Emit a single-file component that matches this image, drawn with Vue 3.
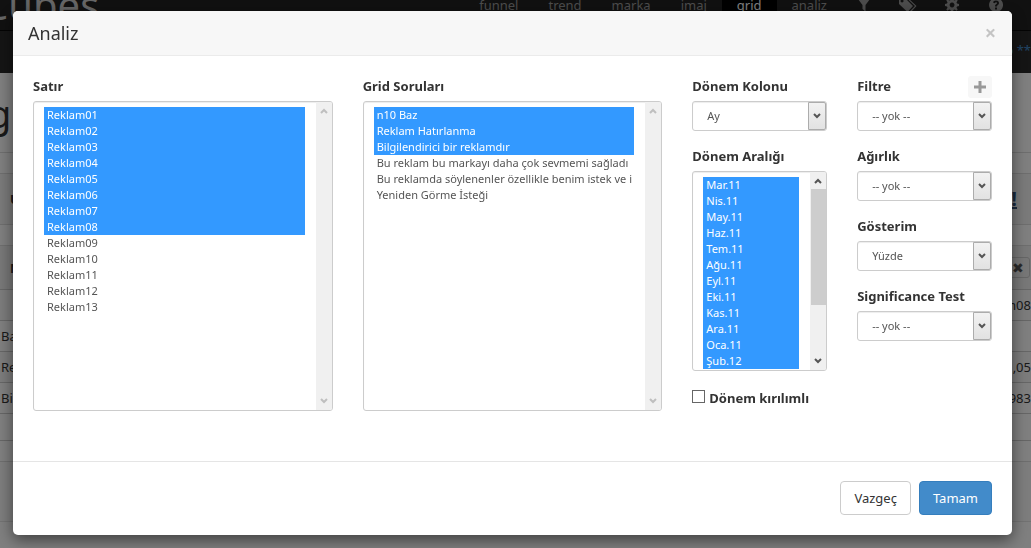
<script setup>
import { ref } from 'vue'

const navLinks = ['funnel', 'trend', 'marka', 'imaj', 'grid', 'analiz']

const rows = Array.from({ length: 13 }, (_, i) => 'Reklam' + String(i + 1).padStart(2, '0'))
const selectedRows = ref(rows.slice(0, 8))

const questions = [
  'n10 Baz',
  'Reklam Hatırlanma',
  'Bilgilendirici bir reklamdır',
  'Bu reklam bu markayı daha çok sevmemi sağladı',
  'Bu reklamda söylenenler özellikle benim istek ve i',
  'Yeniden Görme İsteği',
]
const selectedQuestions = ref(questions.slice(0, 3))

const periods = [
  'Mar.11', 'Nis.11', 'May.11', 'Haz.11', 'Tem.11', 'Ağu.11',
  'Eyl.11', 'Eki.11', 'Kas.11', 'Ara.11', 'Oca.11', 'Şub.12',
]
const selectedPeriods = ref([...periods])

const options = [
  { id: 'filter', label: 'Filtre', value: '-- yok --', add: true },
  { id: 'weight', label: 'Ağırlık', value: '-- yok --' },
  { id: 'display', label: 'Gösterim', value: 'Yüzde' },
  { id: 'significance', label: 'Significance Test', value: '-- yok --' },
]
const splitByPeriod = ref(false)
</script>

<template>
  <div class="page">
    <header class="topbar">
      <span class="brand">Cubes</span>
      <nav class="nav">
        <a v-for="link in navLinks" :key="link" href="#" :class="{ active: link === 'grid' }">{{ link }}</a>
        <a href="#" aria-label="Filtre">
          <svg viewBox="0 0 14 14"><path d="M1 1h12L8.500 7v6.500L5.500 11V7z" /></svg>
        </a>
        <a href="#" aria-label="Etiketler">
          <svg class="wide" viewBox="0 0 18 14"><path fill-rule="evenodd" d="M0 0h6l8 8-5.500 6L0 6zM3 1.500a1.500 1.500 0 1 0 .1 0zM7.500 0H9l8.500 8L12 14l-1-1 5-5z" /></svg>
        </a>
        <a href="#" aria-label="Ayarlar">
          <svg viewBox="0 0 14 14"><path fill-rule="evenodd" d="M6 0h2l.4 2 1.400.6L11.500 1.400 12.700 2.600 11.500 4.200l.5 1.400 2 .4v2l-2 .4-.5 1.400 1.200 1.700-1.200 1.200-1.700-1.200-1.400.5L8 14H6l-.4-2-1.400-.5-1.700 1.200-1.200-1.200 1.200-1.700L2 8.400 0 8V6l2-.4.5-1.400L1.300 2.600l1.200-1.200 1.700 1.200L5.600 2zM7 4.600a2.400 2.400 0 1 0 .1 0z" /></svg>
        </a>
        <a href="#" aria-label="Yardım">
          <svg viewBox="0 0 14 14"><path fill-rule="evenodd" d="M7 0a7 7 0 1 0 .1 0zM4 4.500C4.300 1.800 10 1.700 10 5c0 2-2 1.800-2 3.500H6C6 6 8 6.300 8 5c0-1-1.800-1-2 .300zM6 9.500h2v2H6z" /></svg>
        </a>
      </nav>
    </header>
    <div class="userbar"><a href="#">o **</a></div>
    <main class="content">
      <h1>grid</h1>
      <div class="band short"></div>
      <div class="band tools"><b>U</b><a href="#" class="mark">!</a></div>
      <div class="band short"></div>
      <div class="band head"><b>N</b><button type="button" class="remove" aria-label="Kaldır">✖</button></div>
      <table class="results">
        <tbody>
          <tr><td></td><td>m08</td></tr>
          <tr><td>Baz</td><td></td></tr>
          <tr><td>Reklam</td><td>,05</td></tr>
          <tr><td>Bilgi</td><td>,983</td></tr>
        </tbody>
      </table>
      <div class="band total"></div>
      <div class="band blank"></div>
      <div class="band last"></div>
    </main>
  </div>

  <div class="backdrop">
    <section class="modal" role="dialog" aria-labelledby="title">
      <header class="modal-head">
        <h2 id="title">Analiz</h2>
        <button type="button" class="close" aria-label="Kapat">×</button>
      </header>

      <div class="modal-body">
        <div class="field">
          <label for="rows">Satır</label>
          <div class="listbox tall">
            <select id="rows" v-model="selectedRows" multiple>
              <option v-for="r in rows" :key="r">{{ r }}</option>
            </select>
            <div class="scroll off">
              <svg viewBox="0 0 8 6"><path d="M1 5l3-3 3 3" /></svg>
              <svg viewBox="0 0 8 6"><path d="M1 1l3 3 3-3" /></svg>
            </div>
          </div>
        </div>

        <div class="field">
          <label for="questions">Grid Soruları</label>
          <div class="listbox tall">
            <select id="questions" v-model="selectedQuestions" multiple>
              <option v-for="q in questions" :key="q">{{ q }}</option>
            </select>
            <div class="scroll off">
              <svg viewBox="0 0 8 6"><path d="M1 5l3-3 3 3" /></svg>
              <svg viewBox="0 0 8 6"><path d="M1 1l3 3 3-3" /></svg>
            </div>
          </div>
        </div>

        <div class="stack">
          <div class="field">
            <label for="column">Dönem Kolonu</label>
            <div class="dropdown">
              <select id="column"><option>Ay</option></select>
              <span class="arrow"><svg viewBox="0 0 8 6"><path d="M1 1l3 3 3-3" /></svg></span>
            </div>
          </div>
          <div class="field">
            <label for="periods">Dönem Aralığı</label>
            <div class="listbox low">
              <select id="periods" v-model="selectedPeriods" multiple>
                <option v-for="p in periods" :key="p">{{ p }}</option>
              </select>
              <div class="scroll">
                <svg viewBox="0 0 8 6"><path d="M1 5l3-3 3 3" /></svg>
                <span class="track"><span class="thumb"></span></span>
                <svg viewBox="0 0 8 6"><path d="M1 1l3 3 3-3" /></svg>
              </div>
            </div>
          </div>
          <label class="check"><input v-model="splitByPeriod" type="checkbox" />Dönem kırılımlı</label>
        </div>

        <div class="stack">
          <div v-for="o in options" :key="o.id" class="field">
            <div class="label-row">
              <label :for="o.id">{{ o.label }}</label>
              <button v-if="o.add" type="button" class="add" aria-label="Filtre ekle">
                <svg viewBox="0 0 12 12"><path d="M6 0v12M0 6h12" /></svg>
              </button>
            </div>
            <div class="dropdown">
              <select :id="o.id"><option>{{ o.value }}</option></select>
              <span class="arrow"><svg viewBox="0 0 8 6"><path d="M1 1l3 3 3-3" /></svg></span>
            </div>
          </div>
        </div>
      </div>

      <footer class="modal-foot">
        <button type="button" class="btn">Vazgeç</button>
        <button type="button" class="btn primary">Tamam</button>
      </footer>
    </section>
  </div>
</template>

<style>
body {
  margin: 0;
  background: #fff;
}
</style>

<style scoped>
.page,
.backdrop {
  font-family: "Noto Sans", "Open Sans", sans-serif;
  font-size: 13px;
  line-height: 20px;
  color: #333;
}
.page *,
.backdrop * {
  box-sizing: border-box;
}
.page {
  height: 100vh;
  overflow: hidden;
}
button,
select {
  font-family: inherit;
}

/* page behind the dialog */
.topbar {
  display: flex;
  justify-content: space-between;
  height: 51px;
  margin-top: -20px;
  padding-right: 13px;
  background: #222;
  border-bottom: 1px solid #080808;
}
.brand {
  margin-left: -17px;
  font-size: 40px;
  line-height: 50px;
  color: #ccc;
}
.nav {
  display: flex;
}
.nav a {
  display: flex;
  align-items: center;
  padding: 0 15px;
  color: #999;
  text-decoration: none;
}
.nav a.active {
  color: #fff;
  background: #000;
}
.nav svg {
  width: 14px;
  height: 14px;
  fill: #999;
}
.nav svg.wide {
  width: 18px;
  margin: 0 -2px;
}
.userbar {
  height: 42px;
  padding: 9px 0;
  text-align: right;
  background: #2a2a2a;
}
.userbar a {
  color: #428bca;
  text-decoration: none;
}
.content h1 {
  height: 79px;
  margin: 0 0 0 -12px;
  padding-top: 20px;
  font-size: 38px;
  font-weight: 400;
  line-height: 40px;
}
.band {
  display: flex;
  align-items: center;
  justify-content: space-between;
  border-top: 1px solid #ddd;
}
.band b {
  padding-left: 10px;
}
.short {
  height: 21px;
}
.tools {
  height: 51px;
  background: #f5f5f5;
}
.mark {
  padding-right: 14px;
  font-size: 20px;
  font-weight: 700;
  color: #35537a;
}
.head {
  height: 44px;
  background: #f0f0f0;
}
.remove {
  width: 30px;
  height: 21px;
  margin-right: 1px;
  padding: 0 5px 0 0;
  font-size: 14px;
  line-height: 18px;
  text-align: right;
  color: #555;
  background: #eee;
  border: 1px solid #ccc;
  border-radius: 3px;
}
.results {
  width: 100%;
  border-spacing: 0;
  border-top: 1px solid #ccc;
}
.results td {
  height: 31px;
  padding: 0 1px;
  border-bottom: 1px solid #ccc;
}
.results td:last-child {
  padding: 0;
  text-align: right;
}
.results tr:nth-child(odd) {
  background: #f9f9f9;
}
.total {
  height: 26px;
  border-top: 0;
}
.blank {
  height: 21px;
  border-top-color: #ccc;
}
.last {
  height: 61px;
  background: #fafafa;
  border-bottom: 1px solid #e5e5e5;
}

/* dialog */
.backdrop {
  position: fixed;
  inset: 0;
  overflow: auto;
  background: rgba(0, 0, 0, 0.5);
}
.modal {
  margin: 11px 19px 13px 13px;
  background: #fff;
  border-radius: 5px;
  box-shadow: 0 5px 15px rgba(0, 0, 0, 0.5);
}
.modal-head {
  display: flex;
  align-items: center;
  justify-content: space-between;
  height: 45px;
  padding: 0 15px;
  background: #f7f7f7;
  border-bottom: 1px solid #ebebeb;
  border-radius: 5px 5px 0 0;
}
.modal-head h2 {
  margin: 0;
  font-size: 18px;
  font-weight: 400;
}
.close {
  width: 13px;
  padding: 0;
  font-size: 20px;
  font-weight: 700;
  line-height: 20px;
  color: #c4c4c4;
  background: none;
  border: 0;
}
.modal-body {
  display: grid;
  grid-template-columns: 20fr 20fr 9fr 9fr;
  gap: 30px;
  padding: 20px 20px 50px;
}
.field,
.stack {
  min-width: 0;
}
.stack {
  display: flex;
  flex-direction: column;
  gap: 15px;
}
.field label {
  display: block;
  margin-bottom: 5px;
  font-weight: 700;
  white-space: nowrap;
}
.label-row {
  display: flex;
  align-items: flex-start;
  justify-content: space-between;
  height: 25px;
}
.add {
  display: flex;
  align-items: center;
  justify-content: center;
  width: 24px;
  height: 22px;
  padding: 0;
  background: #f7f7f7;
  border: 0;
  border-radius: 3px;
}
.add svg {
  width: 12px;
  height: 12px;
  stroke: #999;
  stroke-width: 3;
}
.listbox {
  display: flex;
  overflow: hidden;
  border: 1px solid #ccc;
  border-radius: 3px;
  box-shadow: inset 0 1px 1px rgba(0, 0, 0, 0.075);
}
.tall {
  height: 310px;
}
.low {
  height: 200px;
}
.listbox select {
  flex: 1;
  min-width: 0;
  height: 100%;
  padding: 5px 11px 0 10px;
  font-size: 11px;
  line-height: 16px;
  color: #555;
  background: none;
  border: 0;
  outline: 0;
  scrollbar-width: none;
}
.listbox option {
  height: 16px;
  min-height: 16px;
  padding: 0 3px;
  line-height: 16px;
}
.listbox option:checked {
  color: #fff;
  background: #39f linear-gradient(#39f, #39f);
}
.scroll {
  display: flex;
  flex-direction: column;
  align-items: center;
  justify-content: space-between;
  width: 16px;
  padding: 6px 0;
  background: #f0f0f0;
}
.scroll svg,
.arrow svg {
  flex: none;
  width: 8px;
  height: 6px;
  fill: none;
  stroke: #555;
  stroke-width: 2;
}
.scroll.off svg {
  stroke: #bfbfbf;
}
.track {
  flex: 1;
  width: 15px;
  margin: 5px 0;
}
.thumb {
  display: block;
  height: 71%;
  background: #cdcdcd;
}
.dropdown {
  display: grid;
  border: 1px solid #ccc;
  border-radius: 3px;
  box-shadow: inset 0 1px 1px rgba(0, 0, 0, 0.075);
}
.dropdown select {
  grid-area: 1 / 1;
  width: 100%;
  height: 28px;
  padding: 0 20px 2px 14px;
  font-size: 11px;
  color: #555;
  appearance: none;
  background: none;
  border: 0;
}
.arrow {
  display: flex;
  grid-area: 1 / 1;
  align-items: center;
  justify-content: center;
  justify-self: end;
  width: 18px;
  background: linear-gradient(#f2f2f2, #e2e2e2);
  border: 1px solid #acacac;
  border-radius: 0 2px 2px 0;
  pointer-events: none;
}
.check {
  display: flex;
  align-items: center;
  gap: 4px;
  margin-top: 2px;
  font-weight: 700;
  white-space: nowrap;
}
.check input {
  flex: none;
  width: 13px;
  height: 13px;
  margin: 0 0 3px;
  appearance: none;
  background: #fff;
  border: 1px solid #666;
}
.check input:checked {
  background: #39f;
}
.modal-foot {
  display: flex;
  justify-content: flex-end;
  gap: 8px;
  padding: 19px 20px 20px;
  border-top: 1px solid #e5e5e5;
}
.btn {
  height: 34px;
  padding: 0 13px;
  font-size: 13px;
  line-height: 20px;
  color: #333;
  background: #fff;
  border: 1px solid #ccc;
  border-radius: 4px;
}
.primary {
  color: #fff;
  background: #428bca;
  border-color: #357ebd;
}
</style>
